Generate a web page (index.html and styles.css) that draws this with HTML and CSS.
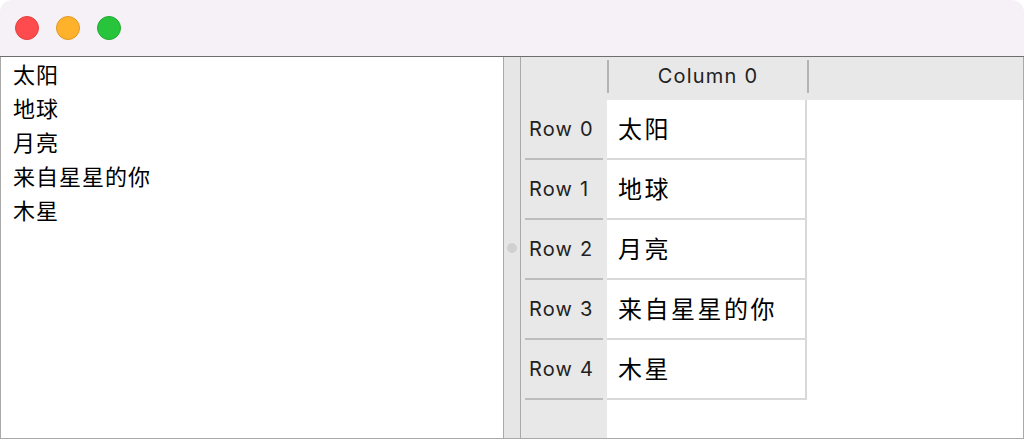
FILE: index.html
```html
<!DOCTYPE html>
<html>
    <head>
        <title>List and Table</title>
        <meta charset="utf-8">
        <link rel="stylesheet" href="styles.css">
    </head>
    <body>
        <div class="window">
            <div class="titlebar">
                <span class="light red"></span>
                <span class="light yellow"></span>
                <span class="light green"></span>
            </div>
            <div class="content">
                <div class="list">
                    <div class="item">太阳</div>
                    <div class="item">地球</div>
                    <div class="item">月亮</div>
                    <div class="item">来自星星的你</div>
                    <div class="item">木星</div>
                </div>
                <div class="splitter"><span class="handle"></span></div>
                <div class="table">
                    <div class="vhead">
                        <div class="corner"></div>
                        <div class="rowhead">Row 0</div>
                        <div class="rowhead">Row 1</div>
                        <div class="rowhead">Row 2</div>
                        <div class="rowhead">Row 3</div>
                        <div class="rowhead">Row 4</div>
                    </div>
                    <div class="grid">
                        <div class="hhead">
                            <div class="colhead">Column 0</div>
                        </div>
                        <div class="cell">太阳</div>
                        <div class="cell">地球</div>
                        <div class="cell">月亮</div>
                        <div class="cell">来自星星的你</div>
                        <div class="cell">木星</div>
                    </div>
                </div>
            </div>
        </div>
    </body>
</html>
```

FILE: styles.css
```css
body {
    margin: 0;
    background: white;
    font-family: "Noto Sans CJK SC", sans-serif;
    color: black;
}

.window {
    width: 1024px;
    height: 439px;
    display: flex;
    flex-direction: column;
}

.titlebar {
    height: 56px;
    background: #f6f1f7;
    border-radius: 12px 12px 0 0;
    border-bottom: 1px solid #6e6e6e;
    display: flex;
    align-items: center;
    padding-left: 15px;
    gap: 17px;
}

.light {
    width: 24px;
    height: 24px;
    border-radius: 50%;
    box-sizing: border-box;
}
.red {
    background: #fe4b4d;
    border: 1px solid #e2403f;
}
.yellow {
    background: #feb22b;
    border: 1px solid #e09a22;
}
.green {
    background: #28c43c;
    border: 1px solid #20aa30;
}

.content {
    flex: 1;
    display: flex;
    border-bottom: 1px solid #a9a9a9;
}

.list {
    width: 504px;
    border-left: 1px solid #a9a9a9;
    border-right: 1px solid #a9a9a9;
    padding: 0 0 0 12px;
    box-sizing: border-box;
}

.item {
    height: 34px;
    line-height: 34px;
    font-size: 22px;
    letter-spacing: 1px;
    margin-top: -1px;
    margin-bottom: 1px;
}

.splitter {
    width: 16px;
    background: #e6e6e6;
    display: flex;
    align-items: center;
    justify-content: center;
}
.handle {
    width: 10px;
    height: 10px;
    border-radius: 50%;
    background: #d0d0d0;
    margin-right: 1px;
}

.table {
    flex: 1;
    display: flex;
    border-left: 1px solid #a9a9a9;
    border-right: 1px solid #a9a9a9;
}

.vhead {
    width: 86px;
    background: #e8e8e8;
    display: flex;
    flex-direction: column;
}
.corner {
    height: 43px;
}
.rowhead {
    height: 60px;
    margin: 0 4px 0 4px;
    border-bottom: 2px solid #bdbdbd;
    box-sizing: border-box;
    display: flex;
    align-items: center;
    padding-left: 4px;
    font-family: "Inter", "Liberation Sans", sans-serif;
    font-size: 20px;
    letter-spacing: 1.2px;
    color: #222;
}

.grid {
    flex: 1;
    display: flex;
    flex-direction: column;
}
.hhead {
    height: 43px;
    background: #e8e8e8;
    display: flex;
    align-items: center;
}
.colhead {
    width: 198px;
    height: 33px;
    margin-top: -5px;
    border-left: 2px solid #b3b3b3;
    border-right: 2px solid #b3b3b3;
    display: flex;
    align-items: center;
    justify-content: center;
    font-family: "Inter", "Liberation Sans", sans-serif;
    font-size: 20px;
    letter-spacing: 1.2px;
    color: #222;
}

.cell {
    width: 200px;
    height: 60px;
    box-sizing: border-box;
    border-right: 2px solid #d9d9d9;
    border-bottom: 2px solid #d9d9d9;
    display: flex;
    align-items: center;
    padding: 0 0 4px 11px;
    font-size: 24px;
    letter-spacing: 2.5px;
}
```
